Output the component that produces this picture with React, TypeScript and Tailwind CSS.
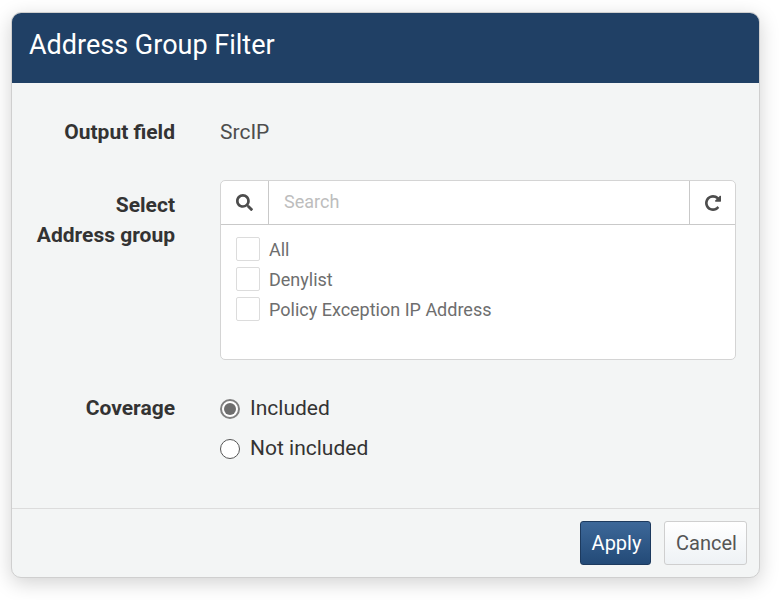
import { FaSearch } from "react-icons/fa";

const items = ["All", "Denylist", "Policy Exception IP Address"];

export default function App() {
  return (
    <div className="w-[782px] h-[600px] bg-white pt-3 pl-[11px] font-['Roboto',sans-serif]">
      <div className="w-[749px] h-[566px] flex flex-col rounded-[10px] border border-[#cfcfcf] bg-[#f3f5f5] overflow-hidden shadow-[0_5px_20px_rgba(0,0,0,0.18)]">
        <header className="h-[71px] shrink-0 bg-[#204065] pl-[17px] pb-[4px] flex items-center -mt-px">
          <h1 className="text-[27px] text-white leading-none">Address Group Filter</h1>
        </header>
        <main className="flex-1 flex flex-col text-[21px] text-[#333]">
          <div className="flex mt-[35px] h-[30px] items-center">
            <div className="w-[163px] text-right font-bold">Output field</div>
            <div className="ml-[45px] text-[#4d4d4d]">SrcIP</div>
          </div>
          <div className="flex mt-[32px]">
            <div className="w-[163px] text-right font-bold leading-[30px] pt-[10px]">
              Select<br />Address group
            </div>
            <div className="ml-[45px] w-[516px] h-[180px] flex flex-col rounded-[5px] border border-[#d4d4d4] bg-white overflow-hidden">
              <div className="flex h-[44px] shrink-0 border-b border-[#c9c9c9]">
                <div className="w-[48px] flex items-center justify-center text-[#4d4d4d] border-r border-[#c9c9c9]">
                  <FaSearch className="w-[17px] h-[17px]" />
                </div>
                <input
                  placeholder="Search"
                  className="flex-1 min-w-0 px-[15px] pb-[2px] text-[18px] outline-none bg-white placeholder:text-[#bdbdbd]"
                />
                <div className="w-[46px] flex items-center justify-center text-[#4d4d4d] border-l border-[#c9c9c9]">
                  <svg viewBox="0 0 1536 1536" className="w-4 h-4" fill="currentColor">
                    <path d="M1536 128v448q0 26-19 45t-45 19h-448q-42 0-59-40-17-39 14-69l138-138q-148-137-349-137-104 0-198.500 40.500t-163.500 109.500-109.500 163.500-40.500 198.500 40.500 198.500 109.500 163.500 163.500 109.500 198.500 40.500q119 0 225-52t179-147q7-10 23-12 15 0 25 9l137 138q9 8 9.500 20.500t-7.500 22.500q-109 132-264 204.500t-327 72.500q-156 0-298-61t-245-164-164-245-61-298 61-298 164-245 245-164 298-61q147 0 284.500 55.500t244.500 156.500l130-129q29-31 70-14 39 17 39 59z" />
                  </svg>
                </div>
              </div>
              <ul className="pl-[15px] pt-[9px] text-[18px] text-[#6e6e6e]">
                {items.map((t) => (
                  <li key={t} className="flex items-center h-[30px]">
                    <span className="w-6 h-6 mr-[9px] bg-white border border-[#dcdcdc] rounded-[2px]" />
                    {t}
                  </li>
                ))}
              </ul>
            </div>
          </div>
          <div className="flex mt-[29px]">
            <div className="w-[163px] text-right font-bold leading-[38px]">Coverage</div>
            <div className="ml-[45px] flex flex-col">
              <label className="flex items-center h-10">
                <span className="w-5 h-5 mr-[10px] rounded-full border-2 border-[#808080] bg-white flex items-center justify-center">
                  <span className="w-3 h-3 rounded-full bg-[#6e6e6e]" />
                </span>
                Included
              </label>
              <label className="flex items-center h-10">
                <span className="w-5 h-5 mr-[10px] rounded-full border border-[#555] bg-white" />
                Not included
              </label>
            </div>
          </div>
        </main>
        <footer className="h-[69px] shrink-0 border-t border-[#dcdcdc] flex items-center justify-end gap-[13px] pr-3">
          <button className="w-[71px] h-[44px] pl-[2px] rounded-[3px] border border-[#1d3a5e] bg-gradient-to-b from-[#3d6899] to-[#234a77] text-white text-[20px]">
            Apply
          </button>
          <button className="w-[83px] h-[44px] pl-[2px] rounded-[3px] border border-[#cfcfcf] bg-gradient-to-b from-white to-[#eef2f5] text-[#555] text-[20px]">
            Cancel
          </button>
        </footer>
      </div>
    </div>
  );
}
